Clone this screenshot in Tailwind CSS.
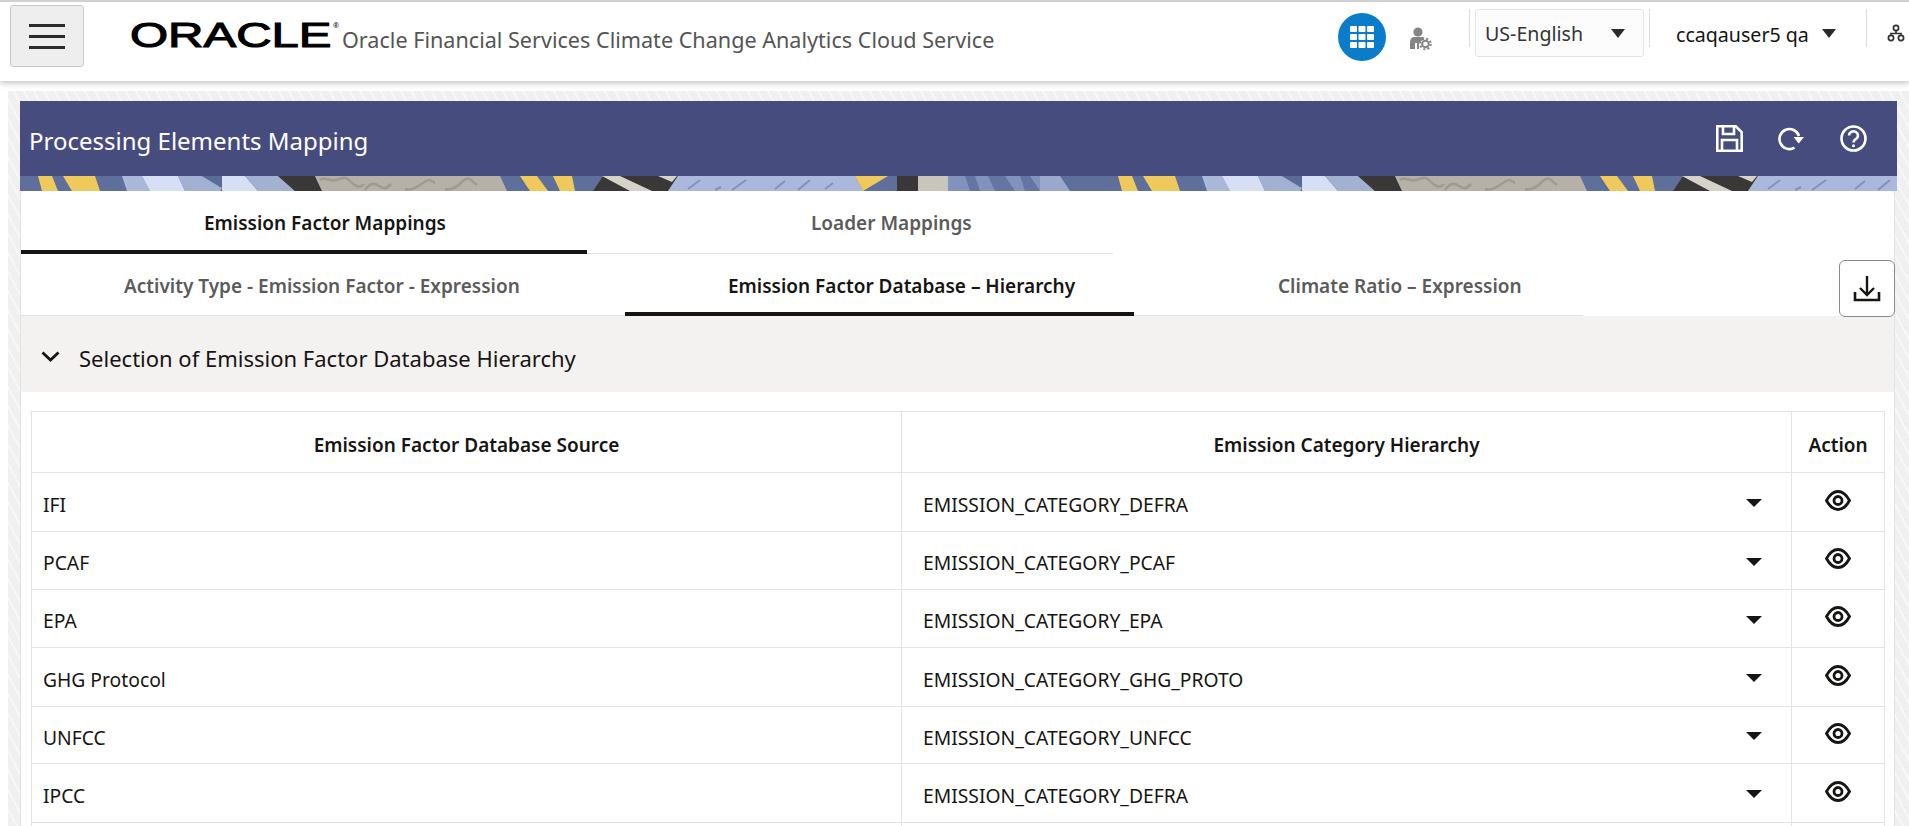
<!DOCTYPE html>
<html lang="en">
<head>
    <meta charset="UTF-8">
    <title>Processing Elements Mapping</title>
    <script src="https://cdn.jsdelivr.net/npm/@tailwindcss/browser@4"></script>
</head>
<body class="bg-white h-[826px] overflow-hidden font-['Noto_Sans',sans-serif] text-[#161513]">
    <!-- Top header -->
    <header class="relative z-10 h-[81px] bg-white border-t-2 border-[#d0d0d0] shadow-[0_2px_6px_rgba(0,0,0,0.25)] flex items-start">
        <button class="mt-[3px] ml-[10px] w-[74px] h-[62px] bg-[#eeeeee] border border-[#c8c8c8] rounded-[3px] flex flex-col items-center justify-center gap-[8px]">
            <span class="block w-[36px] h-[3px] bg-[#2b2b2b]"></span>
            <span class="block w-[36px] h-[3px] bg-[#2b2b2b]"></span>
            <span class="block w-[36px] h-[3px] bg-[#2b2b2b]"></span>
        </button>
        <div class="relative ml-[46px] mt-[14px] w-[212px] h-[38px]">
            <span class="block origin-left scale-x-[1.4] text-[35px] leading-[38px] font-normal text-black [-webkit-text-stroke:1.1px_black] font-['Liberation_Sans',sans-serif]">ORACLE</span>
            <span class="absolute left-[203px] top-[6px] text-[7px] leading-none text-black">®</span>
        </div>
        <div class="mt-[23px] text-[21.6px] leading-[30px] text-[#555] w-[996px] whitespace-nowrap">Oracle Financial Services Climate Change Analytics Cloud Service</div>
        <!-- apps button -->
        <div class="mt-[11px] w-[48px] h-[48px] rounded-full bg-[#0a7cc9] flex items-center justify-center">
            <svg width="24" height="22" viewBox="0 0 24 22" fill="#fff">
                <rect x="0" y="0" width="7" height="6" rx="1"/><rect x="8.5" y="0" width="7" height="6" rx="1"/><rect x="17" y="0" width="7" height="6" rx="1"/>
                <rect x="0" y="8" width="7" height="6" rx="1"/><rect x="8.5" y="8" width="7" height="6" rx="1"/><rect x="17" y="8" width="7" height="6" rx="1"/>
                <rect x="0" y="16" width="7" height="6" rx="1"/><rect x="8.5" y="16" width="7" height="6" rx="1"/><rect x="17" y="16" width="7" height="6" rx="1"/>
            </svg>
        </div>
        <svg class="mt-[25px] ml-[23px]" width="23" height="24" viewBox="0 0 23 24" fill="#858585">
            <circle cx="9" cy="5" r="4.600"/>
            <path d="M1 22v-7c0-3 2-5 4-5h8c1 0 2 .5 2.500 1.200L10 16v6H8v-6H6v6z"/>
            <g fill="none" stroke="#858585">
                <circle cx="16.500" cy="17" r="3.300" stroke-width="2"/>
                <circle cx="16.500" cy="17" r="5.300" stroke-width="2" stroke-dasharray="2 2.160"/>
            </g>
        </svg>
        <div class="ml-[37px] mt-[7px] w-px h-[38px] bg-[#dddddd]"></div>
        <div class="ml-[5px] mt-[7px] w-[169px] h-[48px] bg-[#fcfcfc] border border-[#e4e4e4] rounded-[3px] flex items-center pl-[9px]">
            <span class="text-[19.6px] w-[126px] mt-[2px] text-[#333] whitespace-nowrap">US-English</span>
            <span class="w-0 h-0 border-x-[7px] border-x-transparent border-t-[9px] border-t-[#2b2b2b]"></span>
        </div>
        <div class="ml-[5px] mt-[7px] w-px h-[38px] bg-[#dddddd]"></div>
        <div class="ml-[26px] mt-[7px] h-[48px] flex items-center">
            <span class="text-[19.6px] w-[146px] mt-[4px] whitespace-nowrap">ccaqauser5 qa</span>
            <span class="w-0 h-0 border-x-[7px] border-x-transparent border-t-[9px] border-t-[#2b2b2b]"></span>
        </div>
        <div class="ml-[30px] mt-[7px] w-px h-[38px] bg-[#dddddd]"></div>
        <svg class="mt-[22px] ml-[20px]" width="18" height="18" viewBox="0 0 18 18" fill="none" stroke="#333" stroke-width="1.700">
            <circle cx="9" cy="4" r="2.600"/><circle cx="4" cy="14" r="2.600"/><circle cx="14" cy="14" r="2.600"/>
            <path d="M9 6.600v2.900M4 11.400V9.500h10v1.900"/>
        </svg>
    </header>

    <main class="pl-2 pt-[10px] h-[745px] overflow-hidden">
        <div class="h-full pl-[12px] pr-[12px] pt-[10px] bg-[repeating-linear-gradient(62deg,#f0f0f0_0,#f0f0f0_7px,#f7f7f7_7px,#f7f7f7_9px)]">
            <!-- Title banner -->
            <div class="h-[75px] bg-[#474c7f] text-white flex items-center pl-[9px] pr-[30px]">
                <h1 class="text-[24px] font-normal whitespace-nowrap mt-[5px]">Processing Elements Mapping</h1>
                <div class="ml-auto flex items-center gap-[35px]">
                    <svg width="27" height="27" viewBox="0 0 27 27" fill="none" stroke="#fff" stroke-width="2.600">
                        <path d="M1.300 1.300h18.500l5.900 5.900v18.500H1.300z"/>
                        <path d="M7 1.500v7.500h11V1.500M6 25.500V15h15v10.500"/>
                    </svg>
                    <svg width="27" height="24" viewBox="0 0 27 24" fill="none" stroke="#fff" stroke-width="2.600">
                        <path d="M16.500 20.700A10 10 0 1 1 21 9"/>
                        <path d="M15.500 10h10.500l-5.300 6.500z" stroke="none" fill="#fff"/>
                    </svg>
                    <svg width="27" height="27" viewBox="0 0 27 27" fill="none" stroke="#fff" stroke-width="2.600">
                        <circle cx="13.500" cy="13.500" r="12"/>
                        <path d="M9 10.500a4.500 4.200 0 1 1 6.800 3.600c-1.500.9-2.300 1.700-2.300 3.400"/>
                        <circle cx="13.500" cy="20.700" r="1.500" fill="#fff" stroke="none"/>
                    </svg>
                </div>
            </div>
            <!-- Decorative strip, the tile repeats every 1080px -->
            <svg class="block" width="1877" height="15">
                <defs>
                    <pattern id="strip" width="1080" height="15" patternUnits="userSpaceOnUse">
                        <rect width="1080" height="15" fill="#5f6f9c"/>
                        <polygon points="18,0 32,0 38,15 22,15" fill="#efc95c"/>
                        <polygon points="43,0 75,0 80,15 52,15" fill="#efc95c"/>
                        <polygon points="102,0 122,0 130,15 107,15" fill="#a9b8d8"/>
                        <polygon points="122,0 158,0 165,15 130,15" fill="#d6dff4"/>
                        <polygon points="158,0 182,0 202,12 200,15 165,15" fill="#a2b0d2"/>
                        <polygon points="182,0 202,0 202,12" fill="#5a6b96"/>
                        <polygon points="202,0 225,0 238,15 202,15" fill="#d6dff4"/>
                        <polygon points="225,0 258,0 275,15 238,15" fill="#a2b0d2"/>
                        <polygon points="258,0 295,0 302,15 275,15" fill="#3a3837"/>
                        <polygon points="295,0 480,0 487,15 302,15" fill="#b5b1a8"/>
                        <g fill="none" stroke="#9f9b93" stroke-width="2.600">
                            <path d="M300 4c6 -4 10 2 16 0s10 -4 14 1 10 8 14 3M345 14c4-6 8-8 14-4s8 2 12-2M385 13c6 2 12-2 18-6s6-4 12 0M425 13c6 2 12-2 18-8s8 0 14 4"/>
                        </g>
                        <polygon points="500,0 517,0 528,15 510,15" fill="#efc95c"/>
                        <polygon points="533,0 552,0 555,15 540,15" fill="#efc95c"/>
                        <polygon points="583,0 658,0 648,15 573,15" fill="#3a3837"/>
                        <polygon points="582,0 600,0 632,15 610,15" fill="#d5d2ca"/>
                        <polygon points="638,0 657,0 652,6" fill="#d5d2ca"/>
                        <polygon points="658,0 835,0 843,15 648,15" fill="#aab8dc"/>
                        <g fill="none" stroke="#8392bb" stroke-width="2">
                            <path d="M668 13l12-9M695 14l6-3M712 14l14-10M755 13l10-8M778 14l12-10M805 13l8-6"/>
                        </g>
                        <polygon points="835,0 868,0 843,15" fill="#efc95c"/>
                        <rect x="877" width="21" height="15" fill="#3a3837"/>
                        <rect x="898" width="30" height="15" fill="#c8c5bd"/>
                        <rect x="928" width="92" height="15" fill="#8192bd"/>
                        <g fill="#6475a4">
                            <polygon points="945,0 955,0 960,15 950,15"/>
                            <polygon points="968,0 985,0 995,15 975,15"/>
                            <polygon points="1000,0 1010,0 1020,15 1005,15"/>
                        </g>
                        <polygon points="1020,0 1040,0 1050,15 1020,15" fill="#9aa8cc"/>
                    </pattern>
                </defs>
                <rect width="1877" height="15" fill="url(#strip)"/>
            </svg>

            <div class="w-[1875px] h-[650px] bg-white rounded-t-[4px] border-l border-r border-[#e2e2e2]">
                <!-- Main tabs -->
                <div class="w-[1092px] h-[63px] flex border-b border-[#e3e3e3]">
                    <div class="w-[566px] h-[63px] pl-[183px] pt-[17px] border-b-4 border-[#161513] text-[19px] leading-[30px] font-semibold whitespace-nowrap">Emission Factor Mappings</div>
                    <div class="pl-[224px] pt-[17px] text-[19px] leading-[30px] font-semibold text-[#5b5b5b] whitespace-nowrap">Loader Mappings</div>
                </div>
                <!-- Sub tabs + download -->
                <div class="h-[62px] flex items-start">
                    <div class="w-[1562px] h-[62px] flex border-b border-[#e3e3e3] shrink-0">
                        <div class="w-[604px] pl-[103px] pt-[17px] text-[19px] leading-[30px] font-semibold text-[#5b5b5b] whitespace-nowrap">Activity Type - Emission Factor - Expression</div>
                        <div class="w-[509px] h-[62px] pl-[103px] pt-[17px] border-b-4 border-[#161513] text-[19px] leading-[30px] font-semibold whitespace-nowrap">Emission Factor Database – Hierarchy</div>
                        <div class="pl-[144px] pt-[17px] text-[19px] leading-[30px] font-semibold text-[#5b5b5b] whitespace-nowrap">Climate Ratio – Expression</div>
                    </div>
                    <button class="relative z-10 mt-[6px] ml-auto -mr-px w-[56px] h-[57px] bg-white border border-[#8a8a8a] rounded-[6px] flex items-center justify-center">
                        <svg width="28" height="27" viewBox="0 0 28 27" fill="none" stroke="#161513" stroke-width="2.400">
                            <path d="M14 1v19M7 13l7 7 7-7"/>
                            <path d="M2 17v8h24v-8" stroke-width="2.600"/>
                        </svg>
                    </button>
                </div>
                <!-- Collapsible section -->
                <div class="h-[76px] bg-[#f3f2f0] flex items-center pl-[20px] pt-[9px]">
                    <svg width="19" height="11" viewBox="0 0 19 11" fill="none" stroke="#161513" stroke-width="2.800" class="-mt-[5px]">
                        <path d="M1.500 1.500l8 7.500 8-7.500"/>
                    </svg>
                    <span class="ml-[19px] text-[22px] whitespace-nowrap">Selection of Emission Factor Database Hierarchy</span>
                </div>
                <!-- Table -->
                <table class="ml-[10px] mt-[19px] w-[1853px] table-fixed border-collapse text-[19.3px]">
                    <colgroup><col class="w-[870px]"><col class="w-[890px]"><col class="w-[93px]"></colgroup>
                    <thead>
                        <tr class="h-[61px] text-[19px]">
                            <th class="border border-[#e3e3e3] font-semibold pt-[7px]">Emission Factor Database Source</th>
                            <th class="border border-[#e3e3e3] font-semibold pt-[7px]">Emission Category Hierarchy</th>
                            <th class="border border-[#e3e3e3] font-semibold pt-[7px]">Action</th>
                        </tr>
                    </thead>
                    <tbody>
                        <tr class="h-[59px]">
                            <td class="border border-[#e3e3e3] pl-[11px] pt-[6px]">IFI</td>
                            <td class="border border-[#e3e3e3] pl-[21px] pr-[29px] pt-[6px]"><div class="flex items-center justify-between">EMISSION_CATEGORY_DEFRA<span class="relative -top-[2px] w-0 h-0 border-x-[8px] border-x-transparent border-t-[8px] border-t-[#161513]"></span></div></td>
                            <td class="border border-[#e3e3e3]"><svg class="mx-auto -mt-[4px]" width="26" height="21" viewBox="0 0 26 21" fill="none" stroke="#161513" stroke-width="2.800"><path d="M1.500 10.500C5 4 9 1.500 13 1.500s8 2.500 11.500 9C21 17 17 19.500 13 19.500S5 17 1.500 10.500z"/><circle cx="13" cy="10.500" r="4"/></svg></td>
                        </tr>
                        <tr class="h-[58px]">
                            <td class="border border-[#e3e3e3] pl-[11px] pt-[6px]">PCAF</td>
                            <td class="border border-[#e3e3e3] pl-[21px] pr-[29px] pt-[6px]"><div class="flex items-center justify-between">EMISSION_CATEGORY_PCAF<span class="relative -top-[2px] w-0 h-0 border-x-[8px] border-x-transparent border-t-[8px] border-t-[#161513]"></span></div></td>
                            <td class="border border-[#e3e3e3]"><svg class="mx-auto -mt-[4px]" width="26" height="21" viewBox="0 0 26 21" fill="none" stroke="#161513" stroke-width="2.800"><path d="M1.500 10.500C5 4 9 1.500 13 1.500s8 2.500 11.500 9C21 17 17 19.500 13 19.500S5 17 1.500 10.500z"/><circle cx="13" cy="10.500" r="4"/></svg></td>
                        </tr>
                        <tr class="h-[58px]">
                            <td class="border border-[#e3e3e3] pl-[11px] pt-[6px]">EPA</td>
                            <td class="border border-[#e3e3e3] pl-[21px] pr-[29px] pt-[6px]"><div class="flex items-center justify-between">EMISSION_CATEGORY_EPA<span class="relative -top-[2px] w-0 h-0 border-x-[8px] border-x-transparent border-t-[8px] border-t-[#161513]"></span></div></td>
                            <td class="border border-[#e3e3e3]"><svg class="mx-auto -mt-[4px]" width="26" height="21" viewBox="0 0 26 21" fill="none" stroke="#161513" stroke-width="2.800"><path d="M1.500 10.500C5 4 9 1.500 13 1.500s8 2.500 11.500 9C21 17 17 19.500 13 19.500S5 17 1.500 10.500z"/><circle cx="13" cy="10.500" r="4"/></svg></td>
                        </tr>
                        <tr class="h-[59px]">
                            <td class="border border-[#e3e3e3] pl-[11px] pt-[6px]">GHG Protocol</td>
                            <td class="border border-[#e3e3e3] pl-[21px] pr-[29px] pt-[6px]"><div class="flex items-center justify-between">EMISSION_CATEGORY_GHG_PROTO<span class="relative -top-[2px] w-0 h-0 border-x-[8px] border-x-transparent border-t-[8px] border-t-[#161513]"></span></div></td>
                            <td class="border border-[#e3e3e3]"><svg class="mx-auto -mt-[4px]" width="26" height="21" viewBox="0 0 26 21" fill="none" stroke="#161513" stroke-width="2.800"><path d="M1.500 10.500C5 4 9 1.500 13 1.500s8 2.500 11.500 9C21 17 17 19.500 13 19.500S5 17 1.500 10.500z"/><circle cx="13" cy="10.500" r="4"/></svg></td>
                        </tr>
                        <tr class="h-[57px]">
                            <td class="border border-[#e3e3e3] pl-[11px] pt-[6px]">UNFCC</td>
                            <td class="border border-[#e3e3e3] pl-[21px] pr-[29px] pt-[6px]"><div class="flex items-center justify-between">EMISSION_CATEGORY_UNFCC<span class="relative -top-[2px] w-0 h-0 border-x-[8px] border-x-transparent border-t-[8px] border-t-[#161513]"></span></div></td>
                            <td class="border border-[#e3e3e3]"><svg class="mx-auto -mt-[4px]" width="26" height="21" viewBox="0 0 26 21" fill="none" stroke="#161513" stroke-width="2.800"><path d="M1.500 10.500C5 4 9 1.500 13 1.500s8 2.500 11.500 9C21 17 17 19.500 13 19.500S5 17 1.500 10.500z"/><circle cx="13" cy="10.500" r="4"/></svg></td>
                        </tr>
                        <tr class="h-[59px]">
                            <td class="border border-[#e3e3e3] pl-[11px] pt-[6px]">IPCC</td>
                            <td class="border border-[#e3e3e3] pl-[21px] pr-[29px] pt-[6px]"><div class="flex items-center justify-between">EMISSION_CATEGORY_DEFRA<span class="relative -top-[2px] w-0 h-0 border-x-[8px] border-x-transparent border-t-[8px] border-t-[#161513]"></span></div></td>
                            <td class="border border-[#e3e3e3]"><svg class="mx-auto -mt-[4px]" width="26" height="21" viewBox="0 0 26 21" fill="none" stroke="#161513" stroke-width="2.800"><path d="M1.500 10.500C5 4 9 1.500 13 1.500s8 2.500 11.500 9C21 17 17 19.500 13 19.500S5 17 1.500 10.500z"/><circle cx="13" cy="10.500" r="4"/></svg></td>
                        </tr>
                        <tr class="h-[40px]"><td class="border border-[#e3e3e3]"></td><td class="border border-[#e3e3e3]"></td><td class="border border-[#e3e3e3]"></td></tr>
                    </tbody>
                </table>
            </div>
        </div>
    </main>
</body>
</html>
